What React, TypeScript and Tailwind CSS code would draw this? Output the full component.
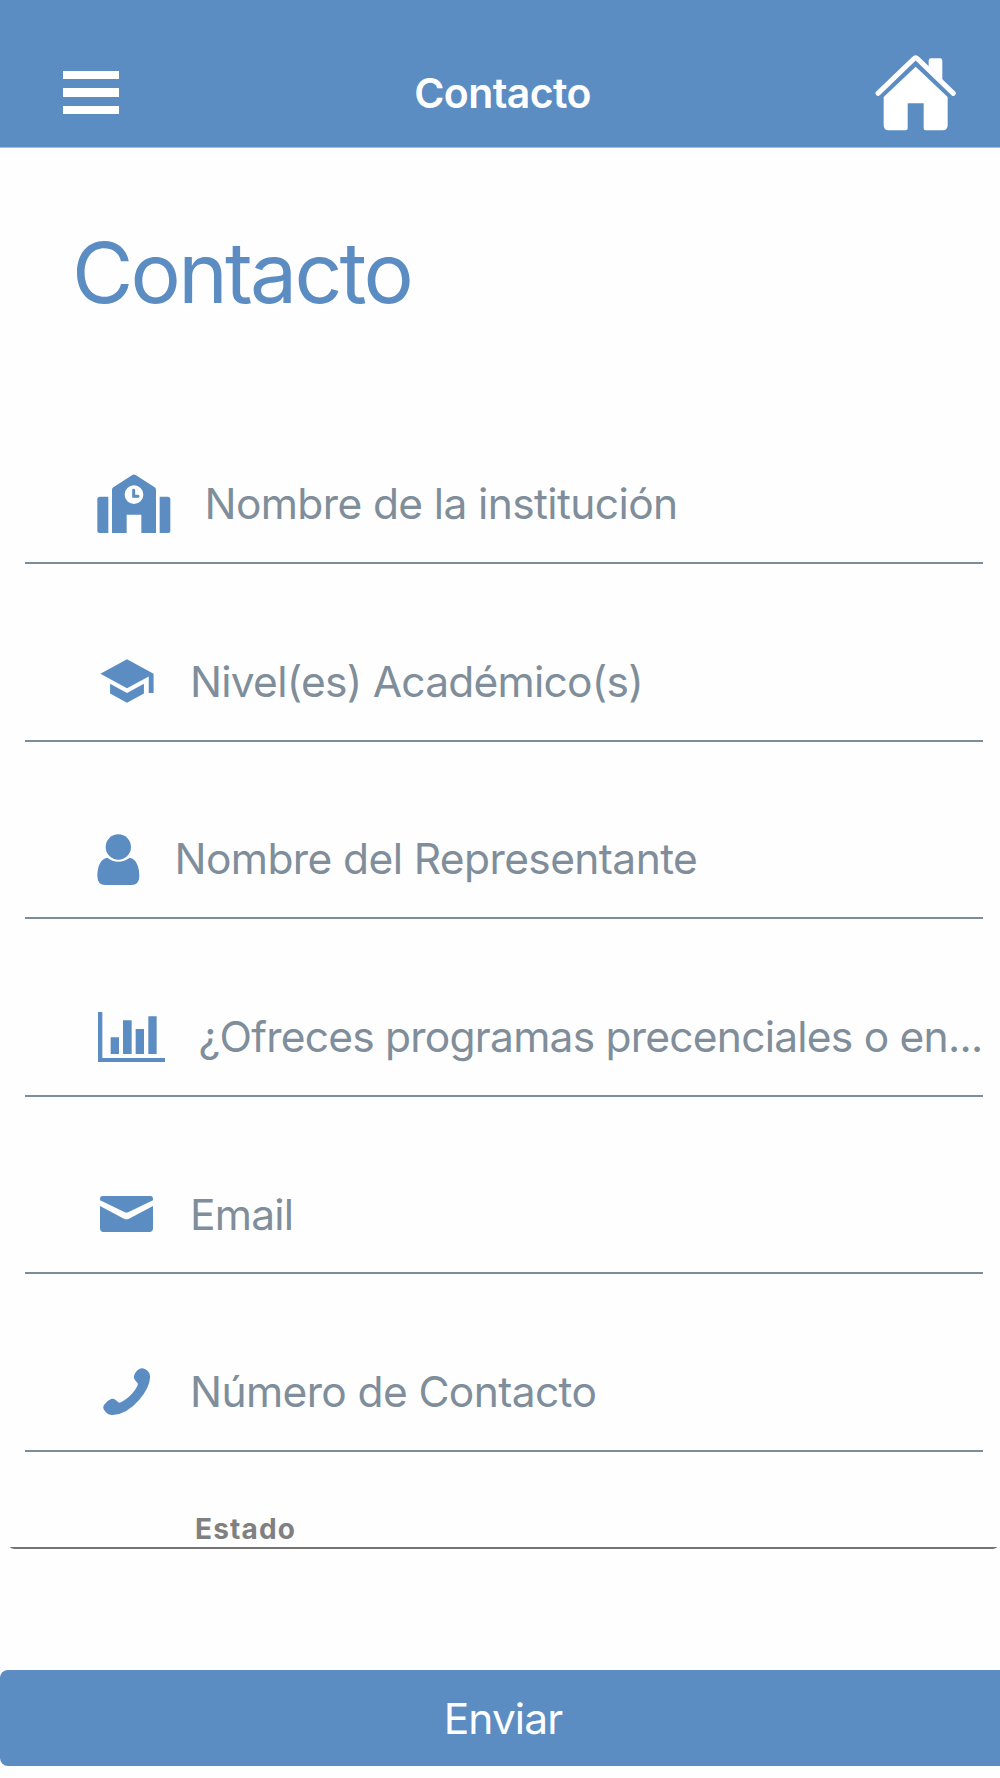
import type { ReactNode } from "react";
import { MdSchool } from "react-icons/md";

interface Field {
  label: string;
  icon: ReactNode;
  iconBox: string;
  labelClass: string;
}

function HomeIcon() {
  return (
    <svg viewBox="1126 74 244 228" className="h-[76px] w-[81.33px]" fill="currentColor">
      <path
        d="M1135 189L1242 86Q1248 80 1254 86L1361 189"
        fill="none"
        stroke="currentColor"
        strokeWidth="15"
        strokeLinecap="round"
        strokeLinejoin="round"
      />
      <path d="M1287 108V91Q1287 84 1294 84H1321Q1328 84 1328 91V148Z" />
      <path d="M1248 109L1344 200V285Q1344 300 1329 300H1278Q1272 300 1272 294V219H1224V294Q1224 300 1218 300H1167Q1152 300 1152 285V200Z" />
    </svg>
  );
}

function InstitutionIcon() {
  return (
    <svg viewBox="111 70 222 178" className="h-[59.33px] w-[74px]" fill="currentColor">
      <path d="M145 138V247H118Q112 247 112 241V146Q112 138 120 138Z" />
      <path d="M299 138V247H325Q331 247 331 241V146Q331 138 323 138Z" />
      <path
        fillRule="evenodd"
        d="M156 247V117Q156 113 160 110L217 73Q222 70 227 73L284 110Q288 113 288 117V247H244V192H200V247ZM222 104A28 28 0 1 0 222 160A28 28 0 1 0 222 104Z"
      />
      <path d="M221 119V137H234" fill="none" stroke="currentColor" strokeWidth="9" strokeLinecap="round" />
    </svg>
  );
}

function PersonIcon() {
  return (
    <svg viewBox="111 71 128 154" className="mt-px h-[51.33px] w-[42.67px]" fill="currentColor">
      <ellipse cx="175" cy="110" rx="38" ry="38" />
      <path d="M142 142Q157 154 175 154T209 142C229 145 238 170 238 197Q238 224 214 224H136Q112 224 112 197C112 170 121 145 142 142Z" />
    </svg>
  );
}

function ChartIcon() {
  return (
    <svg viewBox="112 66 202 150" className="mt-px h-[50px] w-[67.33px]" fill="currentColor">
      <path d="M112 66H125V204H314V216H112Z" />
      <path d="M150 142H175V192H150ZM187 91H213V192H187ZM225 117H250V192H225ZM263 79H288V192H263Z" />
    </svg>
  );
}

function MailIcon() {
  return (
    <svg viewBox="120 77 159 108" className="h-9 w-[53px]" fill="currentColor">
      <path d="M128 77H271Q279 77 279 86V90L206 125Q199 128 193 125L120 90V86Q120 77 128 77Z" />
      <path d="M120 107L192 145Q199 149 207 145L279 107V174Q279 185 268 185H131Q120 185 120 174Z" />
    </svg>
  );
}

function PhoneIcon() {
  return (
    <svg viewBox="129 83 142 142" className="h-[47.33px] w-[47.33px]" fill="currentColor">
      <path d="M222 108Q224 95 238 86Q246 81 256 87Q271 95 270 112Q269 141 238 178Q200 222 158 224Q143 225 133 210Q127 202 132 194Q140 181 153 176Q160 174 166 178L177 187Q187 186 207 169Q232 145 234 130L225 119Q221 115 222 108Z" />
    </svg>
  );
}

const fields: Field[] = [
  {
    label: "Nombre de la institución",
    icon: <InstitutionIcon />,
    iconBox: "ml-[72.5px] w-[107.5px]",
    labelClass: "tracking-[-0.62px]",
  },
  {
    label: "Nivel(es) Académico(s)",
    icon: <MdSchool className="size-[58px]" />,
    iconBox: "ml-[73px] w-[92.5px]",
    labelClass: "tracking-[-0.75px]",
  },
  {
    label: "Nombre del Representante",
    icon: <PersonIcon />,
    iconBox: "ml-[72.5px] w-[77.5px]",
    labelClass: "tracking-[-0.6px]",
  },
  {
    label: "¿Ofreces programas precenciales o en...",
    icon: <ChartIcon />,
    iconBox: "ml-[73px] w-[101px]",
    labelClass: "tracking-[-0.77px]",
  },
  {
    label: "Email",
    icon: <MailIcon />,
    iconBox: "ml-[75.5px] w-[90px]",
    labelClass: "tracking-[-0.8px]",
  },
  {
    label: "Número de Contacto",
    icon: <PhoneIcon />,
    iconBox: "ml-[78.5px] w-[87px]",
    labelClass: "tracking-[-0.62px]",
  },
];

function FieldRow({ field }: { field: Field }) {
  return (
    <div className="flex h-[177.6px] items-center border-b-2 border-[#7c8c99] pt-[59px]">
      <div className={`flex shrink-0 text-[#5b8dc3] ${field.iconBox}`}>{field.icon}</div>
      <span className={`mt-px whitespace-nowrap text-[42.5px] leading-[60px] text-[#7f8e9a] ${field.labelClass}`}>
        {field.label}
      </span>
    </div>
  );
}

export default function App() {
  return (
    <div className="flex h-[1778px] w-[1000px] flex-col overflow-hidden bg-[#fefefe] font-['Inter',sans-serif]">
      <header className="grid h-[147.5px] shrink-0 grid-cols-3 items-center border-b border-[#b5bac4] bg-[#5b8dc3] pt-[38px] text-white">
        <button type="button" className="ml-[63.3px] flex w-[56px] flex-col gap-[9px]">
          <span className="h-[8.5px] w-full bg-white" />
          <span className="h-[8.5px] w-full bg-white" />
          <span className="h-[8.5px] w-full bg-white" />
        </button>
        <span className="pt-[2px] pl-[5px] text-center text-[41px] font-semibold leading-[60px] tracking-[-0.6px]">
          Contacto
        </span>
        <button type="button" className="mt-[2px] mr-[43.3px] flex justify-self-end">
          <HomeIcon />
        </button>
      </header>

      <h1 className="mt-[65px] ml-[72px] h-[174px] shrink-0 text-[84px] leading-[120px] tracking-[-2.8px] text-[#5b8dc3]">
        Contacto
      </h1>

      <form className="ml-[24.5px] w-[958.5px] shrink-0">
        {fields.map((field) => (
          <FieldRow key={field.label} field={field} />
        ))}
      </form>

      <div className="mr-[3px] ml-[10px] flex h-[96.5px] shrink-0 items-end border-b-2 border-[#757272] pl-[185px] [border-bottom-left-radius:7px_2px] [border-bottom-right-radius:7px_2px]">
        <span className="text-[28px] font-bold leading-[36px] tracking-[1.15px] text-[#808080]">Estado</span>
      </div>

      <button
        type="button"
        className="mt-[121.5px] h-[96px] shrink-0 rounded-l-lg bg-[#5b8dc3] pt-[2px] pl-[6px] text-[42.5px] leading-[60px] tracking-[-0.9px] text-white"
      >
        Enviar
      </button>
    </div>
  );
}
